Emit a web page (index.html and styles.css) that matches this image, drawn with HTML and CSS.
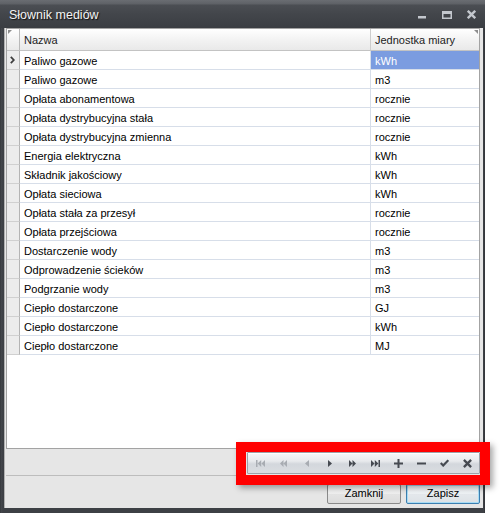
FILE: index.html
```html
<!DOCTYPE html>
<html lang="pl">
<head>
<meta charset="utf-8">
<title>Słownik mediów</title>
<link rel="stylesheet" href="styles.css">
</head>
<body>
<div class="window">
  <div class="titlebar">
    <span class="title">Słownik mediów</span>
    <div class="controls">
      <svg class="ctl min" width="8" height="9" viewBox="0 0 8 9"><rect x="0" y="6" width="8" height="2.5"/></svg>
      <svg class="ctl max" width="10" height="9" viewBox="0 0 10 9"><path d="M0 1h10v8H0Z M1.5 4v3.5h7V4Z" fill-rule="evenodd"/></svg>
      <svg class="ctl close" width="9" height="9" viewBox="0 0 9 9"><path d="M0.8 0.8L8.2 8.2M8.2 0.8L0.8 8.2" stroke-width="2.4" fill="none"/></svg>
    </div>
  </div>
  <div class="client">
    <div class="grid">
      <table>
        <colgroup><col class="c-ind"><col class="c-name"><col class="c-unit"></colgroup>
        <thead>
          <tr><th class="ind"></th><th>Nazwa</th><th class="last">Jednostka miary</th></tr>
        </thead>
        <tbody>
          <tr><td class="ind"><svg class="arrow" width="5" height="8" viewBox="0 0 5 8"><path d="M0.8 0.8L3.8 4L0.8 7.2" fill="none" stroke-width="1.8"/></svg></td><td>Paliwo gazowe</td><td class="sel">kWh</td></tr>
          <tr><td class="ind"></td><td>Paliwo gazowe</td><td>m3</td></tr>
          <tr><td class="ind"></td><td>Opłata abonamentowa</td><td>rocznie</td></tr>
          <tr><td class="ind"></td><td>Opłata dystrybucyjna stała</td><td>rocznie</td></tr>
          <tr><td class="ind"></td><td>Opłata dystrybucyjna zmienna</td><td>rocznie</td></tr>
          <tr><td class="ind"></td><td>Energia elektryczna</td><td>kWh</td></tr>
          <tr><td class="ind"></td><td>Składnik jakościowy</td><td>kWh</td></tr>
          <tr><td class="ind"></td><td>Opłata sieciowa</td><td>kWh</td></tr>
          <tr><td class="ind"></td><td>Opłata stała za przesył</td><td>rocznie</td></tr>
          <tr><td class="ind"></td><td>Opłata przejściowa</td><td>rocznie</td></tr>
          <tr><td class="ind"></td><td>Dostarczenie wody</td><td>m3</td></tr>
          <tr><td class="ind"></td><td>Odprowadzenie ścieków</td><td>m3</td></tr>
          <tr><td class="ind"></td><td>Podgrzanie wody</td><td>m3</td></tr>
          <tr><td class="ind"></td><td>Ciepło dostarczone</td><td>GJ</td></tr>
          <tr><td class="ind"></td><td>Ciepło dostarczone</td><td>kWh</td></tr>
          <tr><td class="ind"></td><td>Ciepło dostarczone</td><td>MJ</td></tr>
        </tbody>
      </table>
    </div>
    <div class="navbar">
      <div class="navigator">
        <span class="nav-btn dis"><svg width="9" height="7" viewBox="0 0 9 7"><path d="M0 0h1.5v7H0Z M5.2 0L1.7 3.5L5.2 7Z M9 0L5.5 3.5L9 7Z"/></svg></span>
        <span class="nav-btn dis"><svg width="7" height="7" viewBox="0 0 7 7"><path d="M3.5 0L0 3.5L3.5 7Z M7 0L3.5 3.5L7 7Z"/></svg></span>
        <span class="nav-btn dis"><svg width="4" height="7" viewBox="0 0 4 7"><path d="M4 0L0 3.5L4 7Z"/></svg></span>
        <span class="nav-btn"><svg width="4" height="7" viewBox="0 0 4 7"><path d="M0 0L4 3.5L0 7Z"/></svg></span>
        <span class="nav-btn"><svg width="7" height="7" viewBox="0 0 7 7"><path d="M0 0L3.5 3.5L0 7Z M3.5 0L7 3.5L3.5 7Z"/></svg></span>
        <span class="nav-btn"><svg width="9" height="7" viewBox="0 0 9 7"><path d="M0 0L3.5 3.5L0 7Z M3.8 0L7.3 3.5L3.8 7Z M7.5 0h1.5v7H7.5Z"/></svg></span>
        <span class="nav-btn"><svg width="9" height="9" viewBox="0 0 9 9"><path d="M3.5 0h2v9h-2Z M0 3.5h9v2H0Z"/></svg></span>
        <span class="nav-btn"><svg width="9" height="9" viewBox="0 0 9 9"><path d="M0 3.5h9v2H0Z"/></svg></span>
        <span class="nav-btn"><svg width="9" height="8" viewBox="0 0 9 8"><path class="stroke" d="M0.7 4L3.2 6.5L8.3 1.2" fill="none" stroke-width="2.2"/></svg></span>
        <span class="nav-btn"><svg width="9" height="9" viewBox="0 0 9 9"><path class="stroke" d="M0.9 0.9L8.1 8.1M8.1 0.9L0.9 8.1" fill="none" stroke-width="2.3"/></svg></span>
      </div>
    </div>
    <div class="footer">
      <button class="btn">Zamknij</button>
      <button class="btn default">Zapisz</button>
    </div>
  </div>
  <div class="highlight"></div>
</div>
</body>
</html>
```

FILE: styles.css
```css
* { box-sizing: border-box; }

body {
  margin: 0;
  background: #ffffff;
  font-family: "Liberation Sans", Arial, sans-serif;
  font-size: 11px;
  color: #000;
}

.window {
  position: relative;
  width: 485px;
  height: 513px;
  display: flex;
  flex-direction: column;
  background: linear-gradient(90deg, #2f3236 0, #44474c 1px, #3d4045 3px, #3d4045 calc(100% - 1px), #2b2d31 100%);
}

.titlebar {
  height: 28px;
  flex: none;
  display: flex;
  align-items: center;
  justify-content: space-between;
  padding: 0 9px 0 9px;
  background: linear-gradient(#6a6d72 0, #5e6166 4px, #4b4e53 5px, #43464b 50%, #3a3d42 100%);
}

.title {
  color: #f3f3f3;
  font-size: 12.5px;
  text-shadow: 1px 1px 1px #111;
  padding-top: 1px;
}

.controls {
  display: flex;
  align-items: center;
}

.ctl { display: block; fill: #c3c7cd; stroke: #c3c7cd; }
.ctl.min { stroke: none; }
.ctl.max { stroke: none; margin-left: 16px; }
.ctl.close { margin-left: 15px; }

.client {
  flex: 1;
  margin: 0 2px 5px 4px;
  background: #e6e6e6;
  border-left: 1px solid #b1b1b1;
  padding: 0 3px 0 1px;
  display: flex;
  flex-direction: column;
}

.grid {
  flex: none;
  height: 421px;
  background: #fff;
  border: 1px solid #a3a3a3;
  overflow: hidden;
}

table {
  border-collapse: separate;
  border-spacing: 0;
  table-layout: fixed;
  width: 472px;
}

.c-ind { width: 13px; }
.c-name { width: 351px; }
.c-unit { width: 108px; }

th {
  position: relative;
  height: 22px;
  padding: 0 0 0 4px;
  text-align: left;
  font-weight: normal;
  color: #222;
  background: linear-gradient(#ffffff, #f3f3f3 50%, #e9e9e9);
  border-bottom: 1px solid #c3c3c3;
  border-right: 1px solid #cdcdcd;
  white-space: nowrap;
}

th.ind { padding: 0; border-right-color: #b9b9b9; }
th.last { border-right: none; }

th.ind::before {
  content: "";
  position: absolute;
  left: 1px;
  top: 1px;
  border-style: solid;
  border-width: 4px 4px 0 0;
  border-color: #8d8d8d transparent transparent transparent;
}

th.last::after {
  content: "";
  position: absolute;
  right: 1px;
  top: 1px;
  border-style: solid;
  border-width: 0 4px 4px 0;
  border-color: transparent #8d8d8d transparent transparent;
}

td {
  height: 19px;
  padding: 1px 0 0 4px;
  border-bottom: 1px solid #d7dee9;
  border-right: 1px solid #d7dee9;
  white-space: nowrap;
  overflow: hidden;
}

td:last-child { border-right: none; }

td.ind {
  padding: 0 0 0 3px;
  background: #ececec;
  border-bottom-color: #d0d0d0;
  border-right-color: #b4b4b4;
}

.arrow { display: block; stroke: #3e3e3e; }

td.sel {
  background: #7b9ce0;
  color: #fff;
}

.navbar {
  flex: none;
  height: 27px;
  border-bottom: 1px solid #bdbdbd;
  display: flex;
  justify-content: flex-end;
  align-items: flex-start;
  padding-top: 3px;
}

.navigator {
  width: 233px;
  height: 22px;
  display: flex;
  padding-left: 1px;
  border: 1px solid #9da2a9;
  border-radius: 1px;
  background: linear-gradient(#f6f7f8 0, #e8eaed 40%, #d3d7dc 55%, #dadde1 100%);
  box-shadow: inset 0 1px 0 #ffffff;
}

.nav-btn {
  width: 23px;
  display: flex;
  align-items: center;
  justify-content: center;
  fill: #464a51;
  stroke: #464a51;
}

.nav-btn svg { display: block; }
.nav-btn svg path { stroke: none; }
.nav-btn svg path.stroke { stroke: inherit; fill: none; }
.nav-btn.dis { fill: #a8acb2; stroke: #a8acb2; }

.footer {
  flex: 1;
  display: flex;
  justify-content: flex-end;
  align-items: flex-start;
  gap: 5px;
  padding-top: 8px;
}

.btn {
  width: 74px;
  height: 20px;
  padding: 0 0 3px 0;
  font-family: "Liberation Sans", Arial, sans-serif;
  font-size: 11px;
  color: #000;
  border: 1px solid #8a8a8a;
  border-radius: 2px;
  background: linear-gradient(#f7f7f7, #efefef 50%, #e4e4e4 50%, #dcdcdc);
}

.btn.default {
  border-color: #3c7fb1;
  background: linear-gradient(#f7f9fb, #eef2f5 50%, #e4e8ec 50%, #dde2e6);
  box-shadow: inset 0 0 0 1px #a9dcf4;
}

.highlight {
  position: absolute;
  left: 236px;
  top: 442px;
  width: 254px;
  height: 43px;
  border: 10px solid #ff0000;
  box-shadow: 3px 3px 6px rgba(0, 0, 0, 0.35);
}
```
